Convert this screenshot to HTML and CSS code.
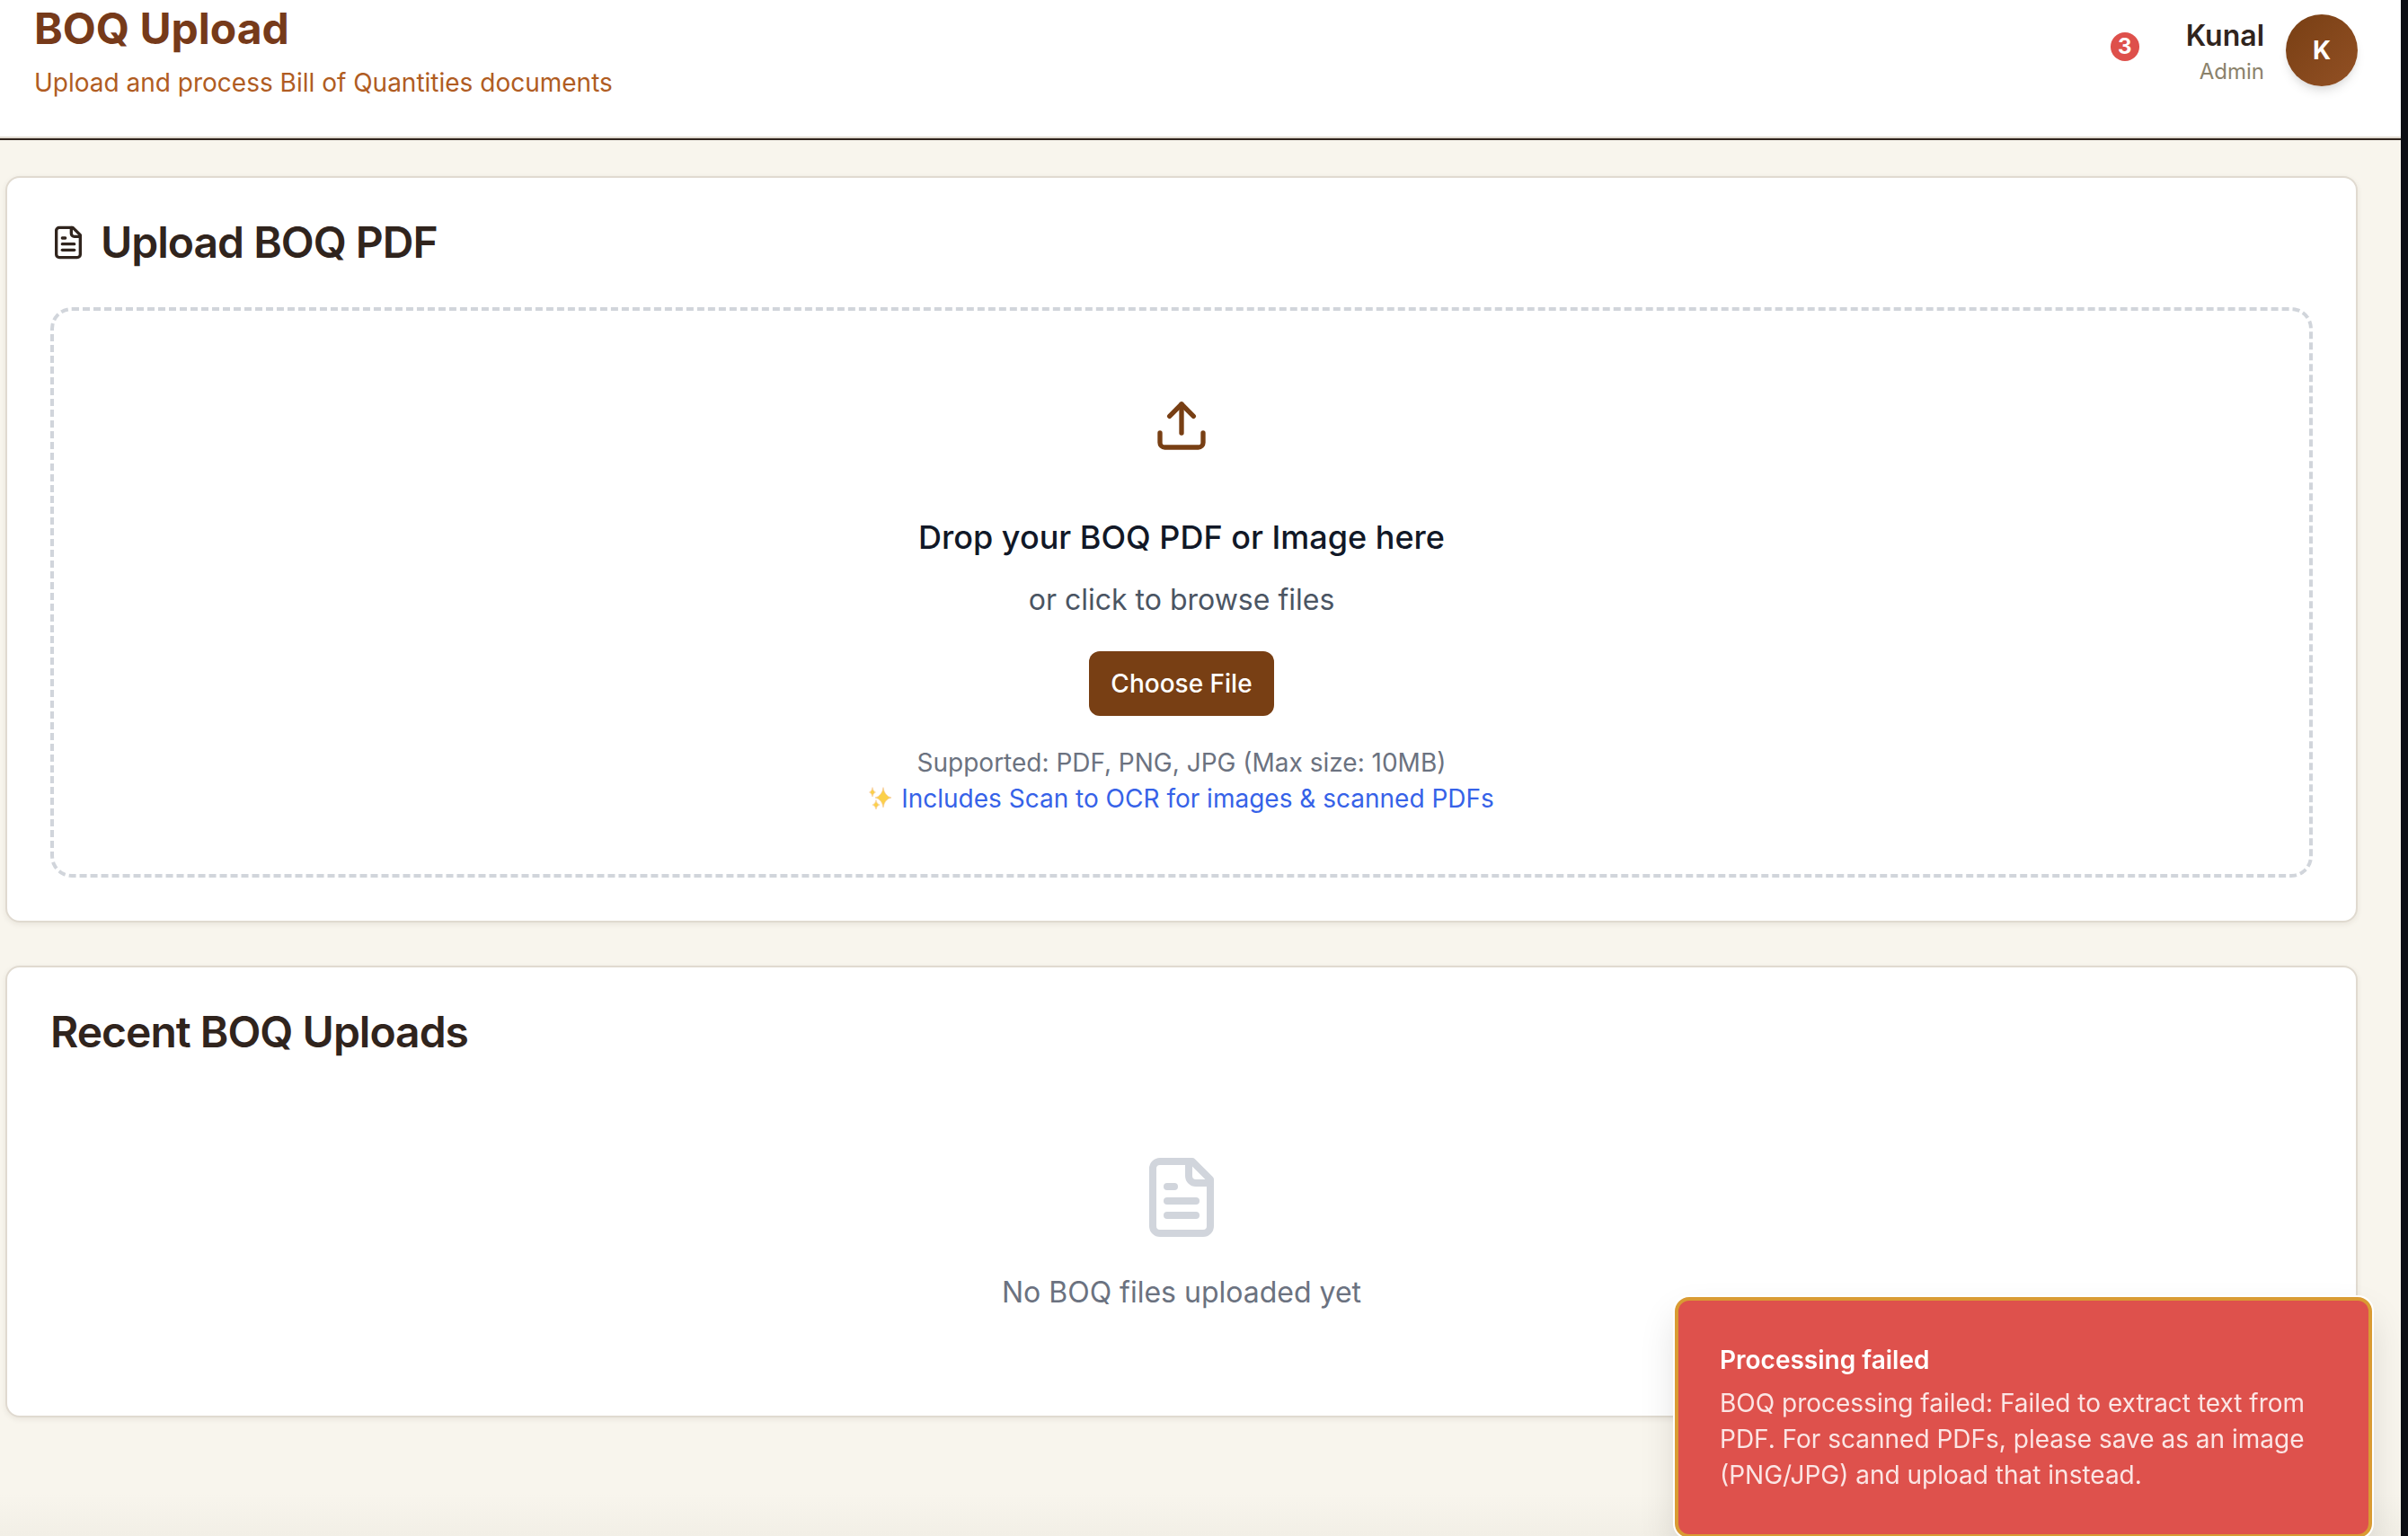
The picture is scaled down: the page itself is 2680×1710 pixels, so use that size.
FILE: index.html
```html
<!DOCTYPE html>
<html lang="en">
<head>
<meta charset="utf-8">
<title>BOQ Upload</title>
<link rel="stylesheet" href="styles.css">
</head>
<body>
<div class="app">
  <header class="topbar">
    <div class="heading">
      <h1 class="page-title">BOQ Upload</h1>
      <p class="page-subtitle">Upload and process Bill of Quantities documents</p>
    </div>
    <div class="account">
      <button class="bell" type="button" aria-label="Notifications"><span class="badge">3</span></button>
      <div class="user">
        <span class="user-name">Kunal</span>
        <span class="user-role">Admin</span>
      </div>
      <div class="avatar">K</div>
    </div>
  </header>

  <main class="content">
    <section class="card">
      <h2 class="card-title">
        <svg class="icon-title" viewBox="0 0 24 24" aria-hidden="true"><path d="M15 2H6a2 2 0 0 0-2 2v16a2 2 0 0 0 2 2h12a2 2 0 0 0 2-2V7Z"/><path d="M14 2v4a2 2 0 0 0 2 2h4"/><path d="M10 9H8"/><path d="M16 13H8"/><path d="M16 17H8"/></svg>
        Upload BOQ PDF
      </h2>
      <div class="dropzone">
        <svg class="icon-upload" viewBox="0 0 24 24" aria-hidden="true"><path d="M21 15v4a2 2 0 0 1-2 2H5a2 2 0 0 1-2-2v-4"/><path d="m17 8-5-5-5 5"/><path d="M12 3v12"/></svg>
        <h3 class="drop-title">Drop your BOQ PDF or Image here</h3>
        <p class="drop-text">or click to browse files</p>
        <button class="choose" type="button">Choose File</button>
        <p class="hint">Supported: PDF, PNG, JPG (Max size: 10MB)</p>
        <p class="hint hint-ocr">
          <svg class="icon-sparkles" viewBox="0 0 28 28" aria-hidden="true"><g fill="#fbd04a" stroke="#f5c592" stroke-width=".6"><path d="M16 2q1.400 9.300 9 11q-7.600 1.700-9 11q-1.400-9.300-9-11q7.600-1.700 9-11Z"/><path d="M4 2q.7 4.200 3.500 5q-2.800.8-3.500 5q-.7-4.200-3.500-5q2.800-.8 3.500-5Z"/><path d="M8 16q.7 4.200 4 5q-3.300.8-4 5q-.7-4.200-4-5q3.300-.8 4-5Z"/></g></svg>
          Includes Scan to OCR for images &amp; scanned PDFs
        </p>
      </div>
    </section>

    <section class="card">
      <h2 class="card-title">Recent BOQ Uploads</h2>
      <div class="empty">
        <svg class="icon-empty" viewBox="0 0 24 24" aria-hidden="true"><path d="M15 2H6a2 2 0 0 0-2 2v16a2 2 0 0 0 2 2h12a2 2 0 0 0 2-2V7Z"/><path d="M14 2v4a2 2 0 0 0 2 2h4"/><path d="M10 9H8"/><path d="M16 13H8"/><path d="M16 17H8"/></svg>
        <p class="empty-text">No BOQ files uploaded yet</p>
      </div>
    </section>
  </main>
</div>

<div class="toast" role="alert">
  <p class="toast-title">Processing failed</p>
  <p class="toast-text">BOQ processing failed: Failed to extract text from PDF. For scanned PDFs, please save as an image (PNG/JPG) and upload that instead.</p>
</div>
</body>
</html>
```
FILE: styles.css
```css
* {
  box-sizing: border-box;
}

body {
  margin: 0;
  height: 100vh;
  overflow: hidden;
  font-family: Inter, "Liberation Sans", sans-serif;
  font-size: 32px;
  background: #0d0e14;
}

h1, h2, h3, p {
  margin: 0;
}

button {
  font: inherit;
  border: 0;
  cursor: pointer;
}

svg {
  flex: none;
  fill: none;
  stroke: currentColor;
  stroke-width: 2;
  stroke-linecap: round;
  stroke-linejoin: round;
}

.app {
  min-height: 100vh;
  margin-right: 8px;
  background: linear-gradient(to top, #f2efe6, #f8f5ed 48px);
}

/* Top bar */
.topbar {
  display: flex;
  justify-content: space-between;
  padding: 0 48px 40px 38px;
  background: #fff;
  border-bottom: 2px solid #30241d;
  box-shadow: inset 0 -2px #e0dad0;
}

.page-title {
  font-size: 48px;
  line-height: 64px;
  font-weight: 700;
  color: #763a1a;
}

.page-subtitle {
  margin-top: 8px;
  padding-bottom: 2px;
  font-size: 28px;
  line-height: 40px;
  color: #b05c22;
}

.account {
  display: flex;
  align-items: flex-start;
  padding-top: 16px;
}

.bell {
  position: relative;
  width: 56px;
  height: 56px;
  margin: 12px 52px 0 0;
  background: none;
}

.badge {
  position: absolute;
  top: 8px;
  right: 0;
  width: 32px;
  height: 32px;
  border-radius: 50%;
  background: #de504b;
  color: #fff;
  font-size: 24px;
  line-height: 32px;
  font-weight: 700;
  text-align: center;
}

.user {
  display: flex;
  flex-direction: column;
  align-items: flex-end;
  margin-right: 24px;
}

.user-name {
  line-height: 48px;
  font-weight: 600;
  color: #30241d;
}

.user-role {
  font-size: 24px;
  line-height: 32px;
  color: #8b826b;
}

.avatar {
  width: 80px;
  height: 80px;
  border-radius: 50%;
  background: linear-gradient(135deg, #783f14, #925024);
  box-shadow: 0 8px 12px -2px rgba(0, 0, 0, 0.1), 0 4px 8px -4px rgba(0, 0, 0, 0.1);
  color: #fff;
  font-size: 28px;
  line-height: 80px;
  font-weight: 700;
  text-align: center;
}

/* Cards */
.content {
  display: flex;
  flex-direction: column;
  gap: 48px;
  padding: 40px 48px 80px 6px;
}

.card {
  padding: 48px;
  background: #fff;
  border: 2px solid #e0dad0;
  border-radius: 16px;
  box-shadow: 0 2px 6px rgba(48, 36, 29, 0.08);
}

.card-title {
  display: flex;
  align-items: center;
  gap: 16px;
  font-size: 48px;
  line-height: 48px;
  font-weight: 600;
  letter-spacing: -1px;
  color: #30241d;
}

.icon-title {
  width: 40px;
  height: 40px;
}

.dropzone {
  display: flex;
  flex-direction: column;
  align-items: center;
  margin-top: 48px;
  padding: 64px;
  border: 4px dashed #d1d5db;
  border-radius: 24px;
  text-align: center;
}

.icon-upload {
  width: 64px;
  height: 64px;
  margin: 32px 0 64px;
  color: #783f14;
}

.drop-title {
  font-size: 36px;
  line-height: 56px;
  font-weight: 500;
  color: #111827;
}

.drop-text {
  margin: 16px 0 32px;
  line-height: 51px;
  color: #4b5563;
}

.choose {
  height: 72px;
  margin-bottom: 32px;
  padding: 0 24px;
  border-radius: 12px;
  background: #783f14;
  color: #fff;
  font-size: 28px;
  font-weight: 500;
}

.hint {
  font-size: 28px;
  line-height: 40px;
  color: #6b7280;
}

.hint-ocr {
  display: flex;
  align-items: center;
  gap: 8px;
  color: #3662e8;
}

.icon-sparkles {
  width: 28px;
  height: 28px;
}

.empty {
  display: flex;
  flex-direction: column;
  align-items: center;
  padding: 112px 0 64px;
}

.icon-empty {
  width: 96px;
  height: 96px;
  margin-bottom: 32px;
  color: #d1d5dc;
}

.empty-text {
  line-height: 51px;
  color: #6b7280;
}

/* Notification */
.toast {
  position: fixed;
  right: 40px;
  bottom: -2px;
  width: 776px;
  padding: 46px;
  border: 4px solid #d99b33;
  border-radius: 16px;
  background: #de514c;
  box-shadow: 0 0 0 2px #fff, 0 20px 40px rgba(0, 0, 0, 0.12);
  color: #fff;
  font-size: 28px;
  line-height: 40px;
}

.toast-title {
  margin-bottom: 8px;
  font-weight: 600;
}

.toast-text {
  color: #fbe5e4;
}
```
